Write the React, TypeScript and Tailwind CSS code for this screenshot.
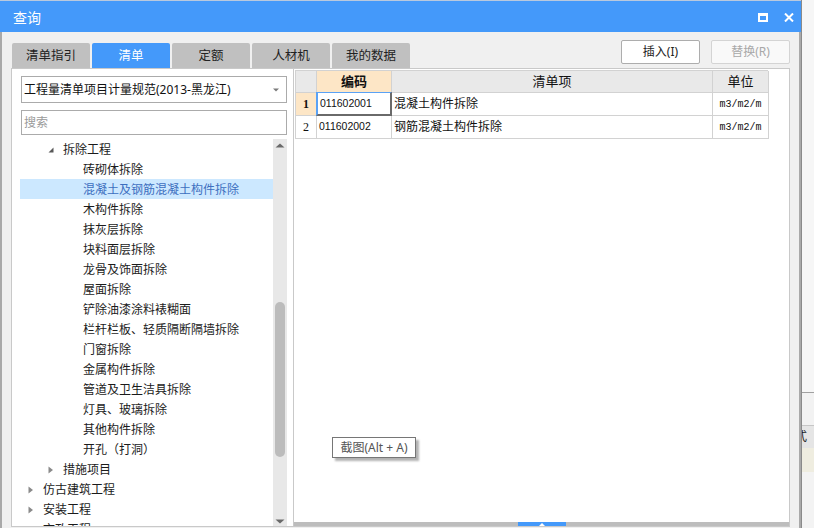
import React from 'react';

type Node = { t: string; lvl: 0 | 1 | 2; exp?: boolean; col?: boolean; sel?: boolean };

const tree: Node[] = [
  { t: '拆除工程', lvl: 1, exp: true },
  { t: '砖砌体拆除', lvl: 2 },
  { t: '混凝土及钢筋混凝土构件拆除', lvl: 2, sel: true },
  { t: '木构件拆除', lvl: 2 },
  { t: '抹灰层拆除', lvl: 2 },
  { t: '块料面层拆除', lvl: 2 },
  { t: '龙骨及饰面拆除', lvl: 2 },
  { t: '屋面拆除', lvl: 2 },
  { t: '铲除油漆涂料裱糊面', lvl: 2 },
  { t: '栏杆栏板、轻质隔断隔墙拆除', lvl: 2 },
  { t: '门窗拆除', lvl: 2 },
  { t: '金属构件拆除', lvl: 2 },
  { t: '管道及卫生洁具拆除', lvl: 2 },
  { t: '灯具、玻璃拆除', lvl: 2 },
  { t: '其他构件拆除', lvl: 2 },
  { t: '开孔（打洞）', lvl: 2 },
  { t: '措施项目', lvl: 1, col: true },
  { t: '仿古建筑工程', lvl: 0, col: true },
  { t: '安装工程', lvl: 0, col: true },
  { t: '市政工程', lvl: 0, col: true },
];

const padCls = ['pl-[8px]', 'pl-[28px]', 'pl-[48px]'];

function TreeRow({ n }: { n: Node }) {
  return (
    <div
      className={`h-[20px] flex items-center shrink-0 ${padCls[n.lvl]} ${
        n.sel ? 'bg-[#cce8ff] text-[#3d6fc0]' : 'text-[#1b1b1b]'
      }`}
    >
      <span className="w-[15px] h-[20px] flex items-center shrink-0">
        {n.exp && (
          <svg width="6" height="6" viewBox="0 0 6 6" className="mt-[1px]">
            <polygon points="5.5,0.5 5.5,5.5 0.5,5.5" fill="#595959" />
          </svg>
        )}
        {n.col && (
          <svg width="6" height="8" viewBox="0 0 6 8" className="mt-[1px]">
            <polygon points="0.5,0.5 5,4 0.5,7.5" fill="#8a8a8a" />
          </svg>
        )}
      </span>
      <span className="whitespace-nowrap leading-[20px] pt-[2px]">{n.t}</span>
    </div>
  );
}

export default function App() {
  const font = "font-['Noto_Sans','Noto_Sans_CJK_SC',sans-serif]";
  return (
    <div className={`w-[814px] h-[528px] flex overflow-hidden bg-[#f4f4f4] relative ${font} text-[12px]`}>
      {/* window */}
      <div className="w-[801px] h-full flex flex-col shrink-0">
        {/* title bar */}
        <div className="h-[32px] shrink-0 bg-[#4499fa] border-t border-[#b9c9de] flex items-center pl-[13px] pr-[6px] pt-[2px]">
          <span className="text-white text-[14px] leading-none">查询</span>
          <div className="flex-1" />
          <div className="w-[10px] h-[9px] border-2 border-t-[3px] border-white" />
          <svg width="10" height="9" viewBox="0 0 10 9" className="ml-[16px] mr-[1px]">
            <path d="M1 0.5 L9 8.5 M9 0.5 L1 8.5" stroke="white" strokeWidth="2" />
          </svg>
        </div>
        {/* body */}
        <div className="flex-1 min-h-0 flex flex-col bg-[#f0f0f0] border-l-2 border-r-2 border-[#a9a9a9] pl-[9px] pr-[9px] pt-[8px] pb-[1px]">
          {/* tabs + buttons */}
          <div className="h-[28px] flex shrink-0">
            <div className="flex items-end gap-[2px] ml-[1px]">
              {['清单指引', '清单', '定额', '人材机', '我的数据'].map((t, i) => (
                <div
                  key={t}
                  className={`w-[78px] h-[25px] rounded-t-[2px] flex items-center justify-center text-[12.5px] leading-none pt-[2px] ${
                    i === 1 ? 'bg-[#4499fa] text-white' : 'bg-[#c0c0c0] text-[#222]'
                  }`}
                >
                  {t}
                </div>
              ))}
            </div>
            <div className="flex-1" />
            <div className="flex gap-[11px] items-start">
              <div className="w-[79px] h-[24px] border border-[#adadad] bg-white rounded-[2px] flex items-center justify-center text-[#222] text-[12px]">
                插入(I)
              </div>
              <div className="w-[79px] h-[24px] border border-[#d4d4d4] bg-[#f9f9f9] rounded-[2px] flex items-center justify-center text-[#a8a8a8] text-[12px]">
                替换(R)
              </div>
            </div>
          </div>
          {/* panels */}
          <div className="flex-1 min-h-0 flex">
            {/* left panel */}
            <div className="w-[282px] h-full bg-white border-l border-t border-b border-[#c9c9c9] flex flex-col shrink-0">
              <div className="ml-[9px] mt-[7px] w-[266px] h-[27px] border border-[#ababab] flex items-center pl-[2px] pr-[7px] shrink-0">
                <span className="text-[#111] whitespace-nowrap pt-[1px]">工程量清单项目计量规范(2013-黑龙江)</span>
                <div className="flex-1" />
                <svg width="6" height="4" viewBox="0 0 6 4">
                  <polygon points="0,0.5 6,0.5 3,3.5" fill="#7a7a7a" />
                </svg>
              </div>
              <div className="ml-[9px] mt-[7px] w-[266px] h-[25px] border border-[#ababab] flex items-center pl-[2px] shrink-0">
                <span className="text-[#9a9a9a]">搜索</span>
              </div>
              <div className="flex-1 min-h-0 mt-[2px] flex">
                <div className="ml-[8px] w-[253px] pt-[2px] flex flex-col overflow-hidden">
                  {tree.map((n) => (
                    <TreeRow key={n.t} n={n} />
                  ))}
                </div>
                <div className="w-[14px] mt-[2px] bg-[#e8e8e8] flex flex-col items-center">
                  <svg width="10" height="5" viewBox="0 0 10 5" className="mt-[4px]">
                    <polygon points="0.5,4.5 9.5,4.5 5,0.5" fill="#6a6a6a" />
                  </svg>
                  <div className="mt-[154px] w-[10px] h-[155px] rounded-[5px] bg-[#bcbcbc]" />
                  <div className="flex-1" />
                  <svg width="10" height="5" viewBox="0 0 10 5" className="mb-[2px]">
                    <polygon points="0.5,0.5 9.5,0.5 5,4.5" fill="#6a6a6a" />
                  </svg>
                </div>
              </div>
            </div>
            {/* right panel */}
            <div className="flex-1 h-full bg-white border border-[#c9c9c9] flex flex-col">
              <div className="ml-[1px] mt-[1px] grid grid-cols-[21px_75px_321px_56px] w-[473px] border-l border-t border-[#d2d2d2]">
                {/* header */}
                <div className="h-[22px] bg-[#e9e9e9] border-r border-b border-[#d2d2d2]" />
                <div className="h-[22px] bg-[#fde6c6] border-r border-b border-[#d2d2d2] flex items-center justify-center font-bold text-[13px] text-[#111]">编码</div>
                <div className="h-[22px] bg-[#e9e9e9] border-r border-b border-[#d2d2d2] flex items-center justify-center text-[13px] text-[#111]">清单项</div>
                <div className="h-[22px] bg-[#e9e9e9] border-r border-b border-[#d2d2d2] flex items-center justify-center text-[13px] text-[#111]">单位</div>
                {/* row 1 */}
                <div className="h-[23px] bg-[#fde6c6] border-r border-b border-[#d2d2d2] flex items-center justify-center font-bold font-['Liberation_Serif',serif] text-[12px] text-[#111]">1</div>
                <div className="border-l-2 border-t border-[#5aa2f5] border-r-2 border-r-[#6a6a6a] border-b-2 border-b-[#6a6a6a] -ml-[1px] -mt-[1px] h-[24px] flex items-center pl-[2px] font-['Liberation_Sans',sans-serif] text-[10.5px] text-[#111]">011602001</div>
                <div className="h-[23px] border-r border-b border-[#d2d2d2] flex items-center pl-[2px] text-[#111]">混凝土构件拆除</div>
                <div className="h-[23px] border-r border-b border-[#d2d2d2] flex items-center justify-center font-['Liberation_Mono',monospace] text-[10px] text-[#111]">m3/m2/m</div>
                {/* row 2 */}
                <div className="h-[23px] border-r border-b border-[#d2d2d2] flex items-center justify-center font-['Liberation_Serif',serif] text-[12px] text-[#111]">2</div>
                <div className="h-[23px] border-r border-b border-[#d2d2d2] flex items-center pl-[2px] font-['Liberation_Sans',sans-serif] text-[10.5px] text-[#111]">011602002</div>
                <div className="h-[23px] border-r border-b border-[#d2d2d2] flex items-center pl-[2px] text-[#111]">钢筋混凝土构件拆除</div>
                <div className="h-[23px] border-r border-b border-[#d2d2d2] flex items-center justify-center font-['Liberation_Mono',monospace] text-[10px] text-[#111]">m3/m2/m</div>
              </div>
              <div className="flex-1" />
              <div className="h-[4px] bg-[#bdbdbd] flex justify-center">
                <div className="w-[48px] h-[4px] bg-[#4499fa] flex items-center justify-center">
                  <svg width="6" height="3" viewBox="0 0 6 3">
                    <polygon points="0,3 6,3 3,0" fill="white" />
                  </svg>
                </div>
              </div>
            </div>
          </div>
        </div>
      </div>
      {/* outside strip */}
      <div className="flex-1 flex flex-col border-l border-[#8a8a8a]">
        <div className="h-[392px] bg-[#f6f6f6]" />
        <div className="h-[1px] bg-[#a0a0a0]" />
        <div className="h-[32px] bg-[#f2f2f2]" />
        <div className="h-[1px] bg-[#c6c6c6]" />
        <div className="h-[22px] bg-[#e5e5e5] overflow-hidden flex items-center">
          <span className="-ml-[7px] text-[12px] text-[#222] leading-none">式</span>
        </div>
        <div className="h-[24px] bg-[#efede0]" />
        <div className="flex-1 bg-[#f3f3f3]" />
      </div>
      {/* tooltip */}
      <div className="absolute left-[332px] top-[437px] w-[84px] h-[21px] border border-[#767676] bg-white shadow-[3px_3px_2px_rgba(0,0,0,0.3)] flex items-center justify-center text-[12px] text-[#555] leading-none">
        截图(Alt + A)
      </div>
    </div>
  );
}
